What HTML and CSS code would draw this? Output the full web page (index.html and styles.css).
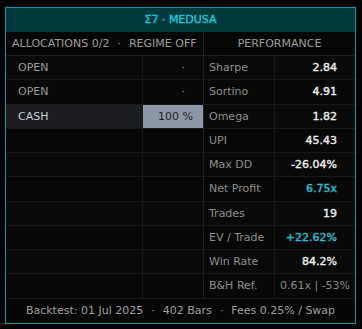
FILE: index.html
```html
<!DOCTYPE html>
<html>
<head>
<meta charset="utf-8">
<link rel="stylesheet" href="styles.css">
</head>
<body>
<div class="panel">
  <div class="title">Σ7 · MEDUSA</div>
  <div class="grid">
    <div class="sub left">ALLOCATIONS 0/2<span class="sep">·</span>REGIME OFF</div>
    <div class="sub right">PERFORMANCE</div>

    <div class="c lab r1">OPEN</div><div class="c val r1">·</div>
    <div class="c plab r1 sec">Sharpe</div><div class="c pval r1">2.84</div>

    <div class="c lab r2">OPEN</div><div class="c val r2">·</div>
    <div class="c plab r2 sec">Sortino</div><div class="c pval r2">4.91</div>

    <div class="c lab cash">CASH</div><div class="c val cashv">100 %</div>
    <div class="c plab r1 sec">Omega</div><div class="c pval r1">1.82</div>

    <div class="c lab r2"></div><div class="c val r2"></div>
    <div class="c plab r2 sec">UPI</div><div class="c pval r2">45.43</div>

    <div class="c lab r1"></div><div class="c val r1"></div>
    <div class="c plab r1 sec">Max DD</div><div class="c pval r1">-26.04%</div>

    <div class="c lab r2"></div><div class="c val r2"></div>
    <div class="c plab r2 sec">Net Profit</div><div class="c pval r2 cyan">6.75x</div>

    <div class="c lab r1"></div><div class="c val r1"></div>
    <div class="c plab r1 sec">Trades</div><div class="c pval r1">19</div>

    <div class="c lab r2"></div><div class="c val r2"></div>
    <div class="c plab r2 sec">EV / Trade</div><div class="c pval r2 cyan">+22.62%</div>

    <div class="c lab r1"></div><div class="c val r1"></div>
    <div class="c plab r1 sec">Win Rate</div><div class="c pval r1">84.2%</div>

    <div class="c lab r2"></div><div class="c val r2"></div>
    <div class="c plab r2 sec">B&amp;H Ref.</div><div class="c pval r2 muted">0.61x | -53%</div>
  </div>
  <div class="foot">Backtest: 01 Jul 2025<span class="sep">·</span>402 Bars<span class="sep">·</span>Fees 0.25% / Swap</div>
</div>
</body>
</html>
```

FILE: styles.css
```css
html, body {
  margin: 0;
  padding: 0;
  background: #000;
}
body {
  padding: 7px 6px 5px 5px;
  font-family: "DejaVu Sans", Verdana, sans-serif;
  font-size: 11px;
}
.panel {
  width: 349px;
  border: 1px solid #1b98a5;
  background: #050505;
}
.title {
  height: 24px;
  line-height: 24px;
  background: #003a3d;
  color: #1fc3d6;
  -webkit-text-stroke: 0.4px #1fc3d6;
  text-align: center;
}
.grid {
  display: grid;
  grid-template-columns: 137px 60px 72px 80px;
  grid-template-rows: 24px repeat(10, 24.25px);
}
.sub {
  box-sizing: border-box;
  height: 24px;
  line-height: 23px;
  color: #9c9c9c;
  background: #060606;
  border-bottom: 1px solid #1c1c1c;
  white-space: nowrap;
}
.sub.left {
  grid-column: 1 / 3;
  padding-left: 6px;
}
.sub.right {
  grid-column: 3 / 5;
  text-align: center;
  border-left: 1px solid #202020;
}
.sep {
  margin: 0 8px;
}
.c {
  box-sizing: border-box;
  border-bottom: 1px solid #191919;
  line-height: 23px;
  white-space: nowrap;
}
.r1 { background: #0a0a0a; }
.r2 { background: #070707; }
.lab {
  padding-left: 12px;
  color: #9a9a9a;
  border-right: 1px solid #1a1a1a;
}
.val {
  text-align: right;
  padding-right: 18px;
  color: #9a9a9a;
}
.cash {
  background: #1b1d20;
  color: #c9ccd0;
}
.cashv {
  background: #8e97a6;
  color: #1c1f24;
  padding-right: 10px;
}
.plab {
  padding-left: 5px;
  color: #8e8e8e;
  border-right: 1px solid #1a1a1a;
}
.sec {
  border-left: 1px solid #202020;
}
.pval {
  text-align: right;
  padding-right: 18px;
  color: #ececec;
  -webkit-text-stroke: 0.4px #ececec;
}
.pval.cyan {
  color: #22c3d6;
  -webkit-text-stroke: 0.4px #22c3d6;
}
.pval.muted {
  color: #8a8a8a;
  -webkit-text-stroke: 0;
  text-align: center;
  padding-right: 0;
}
.foot {
  height: 24px;
  line-height: 24px;
  text-align: center;
  color: #a0a0a0;
  background: #050505;
  white-space: nowrap;
}
```
